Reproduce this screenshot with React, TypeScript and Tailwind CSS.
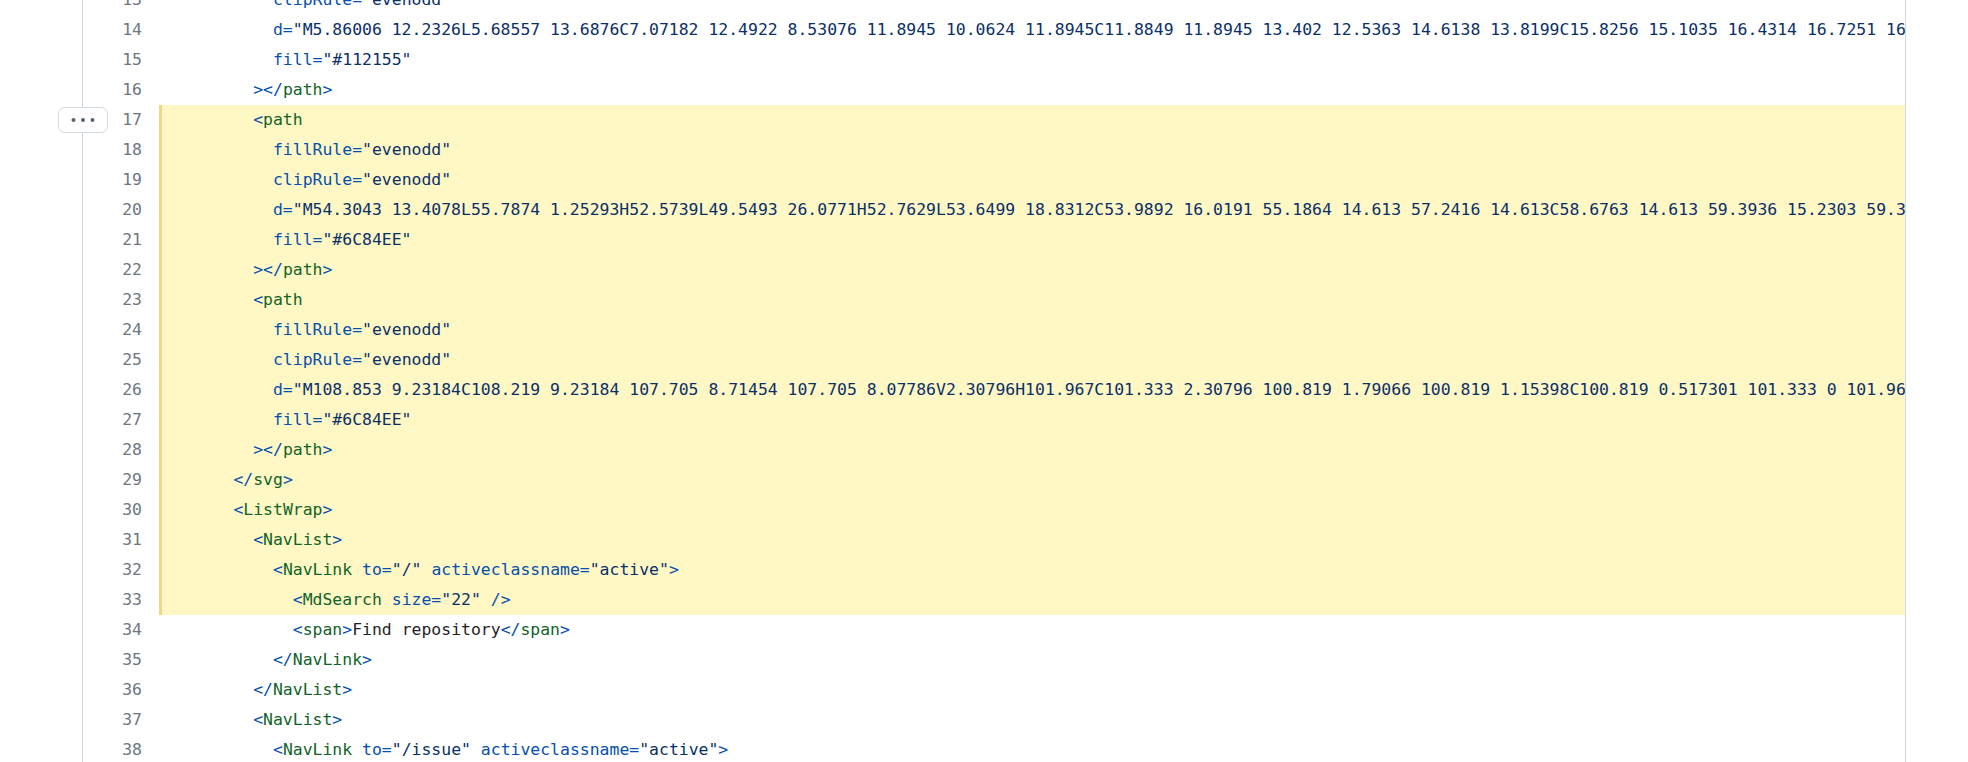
import React from "react";

const B = "text-[#0550ae]";
const G = "text-[#116329]";
const N = "text-[#0a3069]";
const T = "text-[#1f2328]";

type Seg = [string, string];
type Line = { n: number; indent: number; segs: Seg[]; hl?: boolean };

const attr = (name: string, value: string): Seg[] => [
  [B, `${name}=`],
  [N, `"${value}"`],
];
const closePath: Seg[] = [
  [B, "></"],
  [G, "path"],
  [B, ">"],
];
const openPath: Seg[] = [
  [B, "<"],
  [G, "path"],
];
const openTag = (t: string): Seg[] => [
  [B, "<"],
  [G, t],
  [B, ">"],
];
const closeTag = (t: string): Seg[] => [
  [B, "</"],
  [G, t],
  [B, ">"],
];

const D14 =
  "M5.86006 12.2326L5.68557 13.6876C7.07182 12.4922 8.53076 11.8945 10.0624 11.8945C11.8849 11.8945 13.402 12.5363 14.6138 13.8199C15.8256 15.1035 16.4314 16.7251 16.4314 18.6847C16.4314 20.8271 15.7473 22.5947 14.379 23.9873";
const D20 =
  "M54.3043 13.4078L55.7874 1.25293H52.5739L49.5493 26.0771H52.7629L53.6499 18.8312C53.9892 16.0191 55.1864 14.613 57.2416 14.613C58.6763 14.613 59.3936 15.2303 59.3936 16.4648C59.3936 16.7251 59.3708 17.0283";
const D26 =
  "M108.853 9.23184C108.219 9.23184 107.705 8.71454 107.705 8.07786V2.30796H101.967C101.333 2.30796 100.819 1.79066 100.819 1.15398C100.819 0.517301 101.333 0 101.967 0H108.853C109.487 0 110.001 0.517301";

const lines: Line[] = [
  { n: 13, indent: 10, segs: attr("clipRule", "evenodd") },
  { n: 14, indent: 10, segs: attr("d", D14) },
  { n: 15, indent: 10, segs: attr("fill", "#112155") },
  { n: 16, indent: 8, segs: closePath },
  { n: 17, indent: 8, segs: openPath, hl: true },
  { n: 18, indent: 10, segs: attr("fillRule", "evenodd"), hl: true },
  { n: 19, indent: 10, segs: attr("clipRule", "evenodd"), hl: true },
  { n: 20, indent: 10, segs: attr("d", D20), hl: true },
  { n: 21, indent: 10, segs: attr("fill", "#6C84EE"), hl: true },
  { n: 22, indent: 8, segs: closePath, hl: true },
  { n: 23, indent: 8, segs: openPath, hl: true },
  { n: 24, indent: 10, segs: attr("fillRule", "evenodd"), hl: true },
  { n: 25, indent: 10, segs: attr("clipRule", "evenodd"), hl: true },
  { n: 26, indent: 10, segs: attr("d", D26), hl: true },
  { n: 27, indent: 10, segs: attr("fill", "#6C84EE"), hl: true },
  { n: 28, indent: 8, segs: closePath, hl: true },
  { n: 29, indent: 6, segs: closeTag("svg"), hl: true },
  { n: 30, indent: 6, segs: openTag("ListWrap"), hl: true },
  { n: 31, indent: 8, segs: openTag("NavList"), hl: true },
  {
    n: 32,
    indent: 10,
    hl: true,
    segs: [
      [B, "<"],
      [G, "NavLink"],
      [T, " "],
      ...attr("to", "/"),
      [T, " "],
      ...attr("activeclassname", "active"),
      [B, ">"],
    ],
  },
  {
    n: 33,
    indent: 12,
    hl: true,
    segs: [
      [B, "<"],
      [G, "MdSearch"],
      [T, " "],
      ...attr("size", "22"),
      [T, " "],
      [B, "/>"],
    ],
  },
  {
    n: 34,
    indent: 12,
    segs: [
      [B, "<"],
      [G, "span"],
      [B, ">"],
      [T, "Find repository"],
      [B, "</"],
      [G, "span"],
      [B, ">"],
    ],
  },
  { n: 35, indent: 10, segs: closeTag("NavLink") },
  { n: 36, indent: 8, segs: closeTag("NavList") },
  { n: 37, indent: 8, segs: openTag("NavList") },
  {
    n: 38,
    indent: 10,
    segs: [
      [B, "<"],
      [G, "NavLink"],
      [T, " "],
      ...attr("to", "/issue"),
      [T, " "],
      ...attr("activeclassname", "active"),
      [B, ">"],
    ],
  },
];

function Dots() {
  return (
    <svg width="24" height="6" viewBox="0 0 24 6" fill="#59636e">
      <circle cx="2.5" cy="3" r="2" />
      <circle cx="12" cy="3" r="2" />
      <circle cx="21.5" cy="3" r="2" />
    </svg>
  );
}

export default function App() {
  return (
    <div
      className="flex h-[762px] w-[1968px] overflow-hidden bg-white text-[16.45px] leading-[30px]"
      style={{ fontFamily: '"DejaVu Sans Mono", "Liberation Mono", monospace' }}
    >
      <div className="relative w-[83px] shrink-0 border-r border-[#d1d9e0]">
        <button className="absolute left-[58px] top-[107px] flex h-[26px] w-[50px] items-center justify-center rounded-[7px] border border-[#d1d9e0] bg-white">
          <Dots />
        </button>
      </div>
      <div className="w-[1823px] shrink-0 overflow-hidden border-r border-[#d1d9e0]">
        <div className="-mt-[15px] flex flex-col">
          {lines.map((l) => (
            <div key={l.n} className="flex h-[30px]">
              <div className="w-[76px] shrink-0 pr-[17px] text-right text-[#6e7781]">
                {l.n}
              </div>
              <div
                className={
                  l.hl
                    ? "flex-1 overflow-hidden whitespace-pre border-l-[3px] border-[#eed888] bg-[#fff8c5] pl-[12px]"
                    : "flex-1 overflow-hidden whitespace-pre border-l-[3px] border-transparent pl-[12px]"
                }
              >
                <span>{" ".repeat(l.indent)}</span>
                {l.segs.map((s, i) => (
                  <span key={i} className={s[0]}>
                    {s[1]}
                  </span>
                ))}
              </div>
            </div>
          ))}
        </div>
      </div>
      <div className="flex-1" />
    </div>
  );
}
